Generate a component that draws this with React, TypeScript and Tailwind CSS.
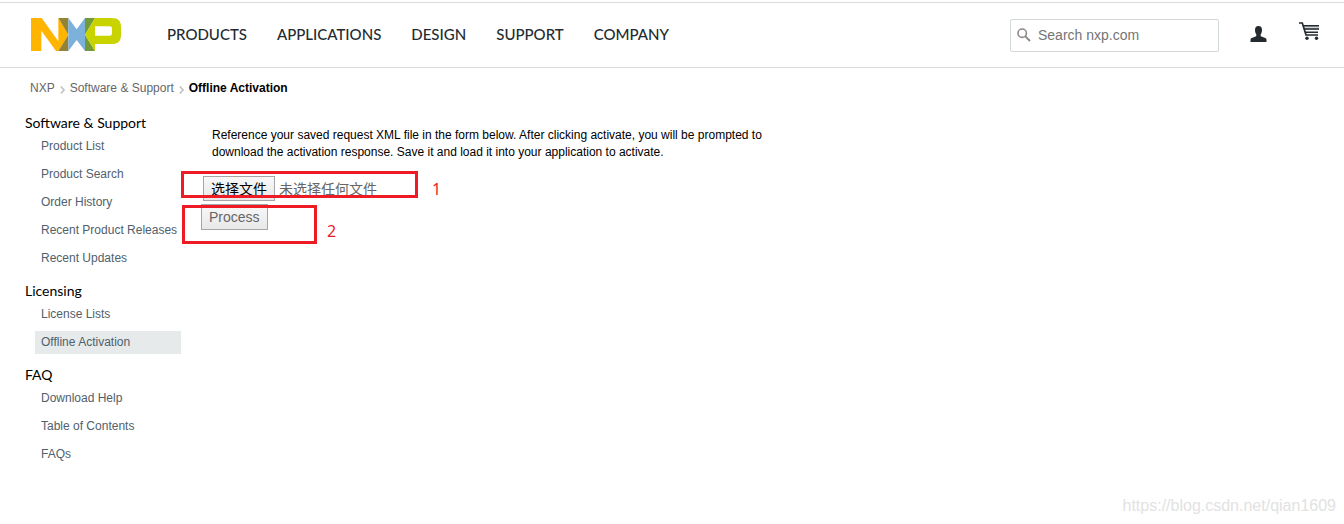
import { useState } from 'react';

const navItems = ['PRODUCTS', 'APPLICATIONS', 'DESIGN', 'SUPPORT', 'COMPANY'];

const sections = [
  { title: 'Software & Support', links: ['Product List', 'Product Search', 'Order History', 'Recent Product Releases', 'Recent Updates'] },
  { title: 'Licensing', links: ['License Lists', 'Offline Activation'] },
  { title: 'FAQ', links: ['Download Help', 'Table of Contents', 'FAQs'] },
];

function Logo() {
  return (
    <svg className="h-[33px] w-[90px]" viewBox="0 0 270 99" aria-hidden="true">
      <path fill="#ffb400" d="M0 0h32l50 70V0l30 50-30 49H75L31 38v61H0z" />
      <path fill="#958335" d="M82 0h30v99H82l30-49z" />
      <path fill="#7bb1db" d="M112 0l25 34 25-34v99l-25-33-25 33z" />
      <path fill="#729a36" d="M162 0h30l-30 50 30 49h-30z" />
      <path fill="#c9d300" fillRule="evenodd" d="M192 0h50c20 0 28 9 28 28v22c0 19-8 28-28 28h-50v21l-30-49zM192 25v28h43c6 0 8-2 8-7V32c0-5-2-7-8-7z" />
    </svg>
  );
}

function SearchIcon() {
  return (
    <svg className="size-[14px] shrink-0" viewBox="0 0 14 14" fill="none" stroke="#8a8a8a" aria-hidden="true">
      <circle cx="5.2" cy="5.2" r="4.2" strokeWidth="1.6" />
      <path d="M8.4 8.4l4.6 4.6" strokeWidth="2" />
    </svg>
  );
}

function UserIcon() {
  return (
    <svg className="h-4 w-[17px]" viewBox="0 0 17 16" fill="#232b31" aria-hidden="true">
      <path d="M8.5 0C10.9 0 12 1.6 12 4c0 1.700-.5 3.300-1.300 4.300v1.200c0 .6.2.9.8 1.100l3.700 1.400c1 .4 1.300 1 1.300 2V16H.5v-2c0-1 .3-1.600 1.300-2l3.700-1.400c.6-.2.8-.5.8-1.100V8.300C5.500 7.300 5 5.700 5 4c0-2.400 1.100-4 3.500-4z" />
    </svg>
  );
}

function CartIcon() {
  return (
    <svg className="h-[18px] w-5" viewBox="0 0 20 18" fill="none" stroke="#232b31" aria-hidden="true">
      <path fill="#cdd2d2" stroke="none" d="M4 4h16v4H5z" />
      <path d="M0 1h3.300L7 13h12" strokeWidth="1.700" />
      <path d="M4 3.800h16M5 7h15M6 10.200h13" strokeWidth="1.500" />
      <circle cx="8" cy="16.200" r="1.700" fill="#232b31" stroke="none" />
      <circle cx="17.500" cy="16.200" r="1.700" fill="#232b31" stroke="none" />
    </svg>
  );
}

function Separator() {
  return (
    <svg className="mt-1 h-2 w-[5px]" viewBox="0 0 5 8" fill="none" stroke="#c4c4c4" strokeWidth="1.700" aria-hidden="true">
      <path d="M.8.5L4 4 .8 7.500" />
    </svg>
  );
}

function Header() {
  return (
    <header className="mt-[2px] flex h-[66px] items-center border-y border-[#d9dcde] pr-[25px] pl-[31px]">
      <a href="#" aria-label="NXP" className="mb-[2px]"><Logo /></a>
      <nav className="ml-[46px] flex gap-[30px] font-['Lato',sans-serif] text-[15px] font-medium text-[#232b31]">
        {navItems.map(item => <a key={item} href="#">{item}</a>)}
      </nav>
      <label className="ml-auto flex h-[33px] w-[209px] items-center gap-[7px] rounded-[2px] border border-[#d3d8db] px-[6px]">
        <SearchIcon />
        <input type="search" aria-label="Search nxp.com" placeholder="Search nxp.com" className="w-full min-w-0 text-sm outline-none placeholder:text-[#757575]" />
      </label>
      <button type="button" aria-label="Account" className="mb-[2px] ml-[31px]"><UserIcon /></button>
      <button type="button" aria-label="Cart" className="mb-[9px] ml-8"><CartIcon /></button>
    </header>
  );
}

function Sidebar() {
  return (
    <aside className="flex w-[156px] shrink-0 flex-col gap-[11px]">
      {sections.map(section => (
        <section key={section.title}>
          <h2 className="font-['Lato',sans-serif] text-sm leading-5 text-black">{section.title}</h2>
          <ul className="mt-[2px] ml-[10px] flex flex-col gap-[5px]">
            {section.links.map(link => (
              <li key={link} className={link === 'Offline Activation' ? 'bg-[#e6eaea]' : ''}>
                <a href="#" className="block pl-[6px] leading-[23px] whitespace-nowrap text-[#51606b]">{link}</a>
              </li>
            ))}
          </ul>
        </section>
      ))}
    </aside>
  );
}

function ActivationForm() {
  const [fileName, setFileName] = useState('');

  return (
    <form className="relative mt-[15px] text-sm text-[#666]" onSubmit={e => e.preventDefault()}>
      <div className="ml-[22px] flex h-[25px] items-center gap-1 font-['Liberation_Sans','Noto_Sans_CJK_SC',sans-serif]">
        <label htmlFor="request" className="flex h-[25px] items-center border border-[#a6a6a6] bg-linear-to-b from-[#f8f8f8] to-[#e8e8e8] px-[7px] text-black">选择文件</label>
        <input id="request" type="file" className="sr-only" onChange={e => setFileName(e.target.files?.[0]?.name || '')} />
        <span>{fileName || '未选择任何文件'}</span>
      </div>
      <button type="submit" className="mt-[3px] ml-5 block h-[26px] border border-[#a6a6a6] bg-linear-to-b from-[#f8f8f8] to-[#e8e8e8] px-[7px]">Process</button>

      {/* step markers */}
      <div className="pointer-events-none absolute -top-[5px] left-0 h-[27px] w-[237px] border-3 border-[#ed1c24]" />
      <span className="absolute top-px left-[251px] font-['Noto_Sans',sans-serif] text-base text-[#ed1c24]">1</span>
      <div className="pointer-events-none absolute top-[29px] left-px h-[39px] w-[135px] border-3 border-[#ed1c24]" />
      <span className="absolute top-[43px] left-[146px] font-['Noto_Sans',sans-serif] text-base text-[#ed1c24]">2</span>
    </form>
  );
}

export default function App() {
  return (
    <div className="flex min-h-screen flex-col bg-white font-['Liberation_Sans',Arial,sans-serif] text-xs text-black">
      <Header />
      <nav aria-label="Breadcrumb" className="mt-3 flex items-center gap-[5px] pl-[30px] text-[#666]">
        <a href="#">NXP</a>
        <Separator />
        <a href="#">Software &amp; Support</a>
        <Separator />
        <span className="font-bold text-black">Offline Activation</span>
      </nav>
      <div className="mt-[17px] flex pl-[25px]">
        <Sidebar />
        <main className="min-w-0 flex-1">
          <p className="mt-[14px] ml-[31px] max-w-[570px] leading-[17px]">
            Reference your saved request XML file in the form below. After clicking activate, you will be prompted to download the activation response. Save it and load it into your application to activate.
          </p>
          <ActivationForm />
        </main>
      </div>
      <footer className="mt-auto pr-2 pb-[6px] text-right text-base text-[#e2e2e2]">https://blog.csdn.net/qian1609</footer>
    </div>
  );
}
